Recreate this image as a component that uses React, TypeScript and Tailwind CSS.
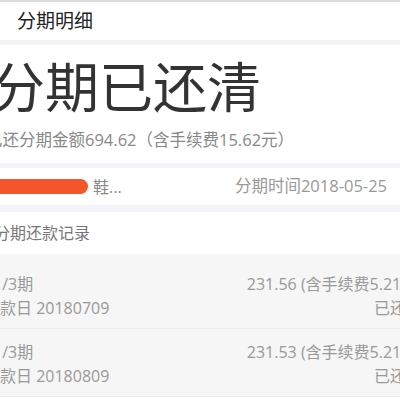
const records = [
  { period: "1/3期", amount: "231.56 (含手续费5.21元)", date: "20180709", status: "已还款" },
  { period: "1/3期", amount: "231.53 (含手续费5.21元)", date: "20180809", status: "已还款" },
];

export default function App() {
  return (
    <div className="h-[405px] w-[400px] overflow-hidden bg-white font-['Open_Sans','Noto_Sans_CJK_SC',sans-serif]">
      <div className="h-[2px] bg-[#dcdcdc]" />
      <header className="flex h-[38px] items-center pl-[17px] text-[19px] text-[#222]">分期明细</header>
      <div className="h-[5px] bg-[#f3f3f6]" />

      {/* status */}
      <section className="pt-[15px] pb-[13px]">
        <h1 className="-ml-[9px] whitespace-nowrap text-[54px] leading-[54px] text-[#333]">分期已还清</h1>
        <p className="mt-[16px] -ml-[14px] whitespace-nowrap text-[16.5px] leading-[20px] text-[#888]">
          已还分期金额694.62（含手续费15.62元）
        </p>
      </section>
      <div className="h-[5px] bg-[#f4f4f8]" />

      <div className="flex h-[37px] items-center justify-between pr-[13px]">
        <div className="flex items-center">
          <span className="-ml-[12px] h-[15px] w-[100px] rounded-full bg-[#f3562b]" />
          <span className="ml-[5px] text-[16px] text-[#888]">鞋...</span>
        </div>
        <span className="whitespace-nowrap text-[16.5px] text-[#999]">分期时间2018-05-25</span>
      </div>
      <div className="h-[7px] bg-[#f4f4f8]" />

      <div className="flex h-[42px] items-center">
        <span className="-ml-[6px] whitespace-nowrap text-[16px] text-[#777]">分期还款记录</span>
      </div>

      {/* records */}
      <div className="bg-[#f6f6f6] pt-[7px]">
        {records.map((r, i) => (
          <div
            key={i}
            className="-ml-[7px] flex w-[429px] justify-between border-b border-[#ebebeb] pt-[13px] pb-[10px] text-[16px] leading-[20px] text-[#999]"
          >
            <div className="flex flex-col gap-[4px] whitespace-nowrap">
              <span>{r.period}</span>
              <span className="-ml-[9px]">还款日 {r.date}</span>
            </div>
            <div className="flex flex-col items-end gap-[4px] whitespace-nowrap">
              <span>{r.amount}</span>
              <span>{r.status}</span>
            </div>
          </div>
        ))}
      </div>
    </div>
  );
}
